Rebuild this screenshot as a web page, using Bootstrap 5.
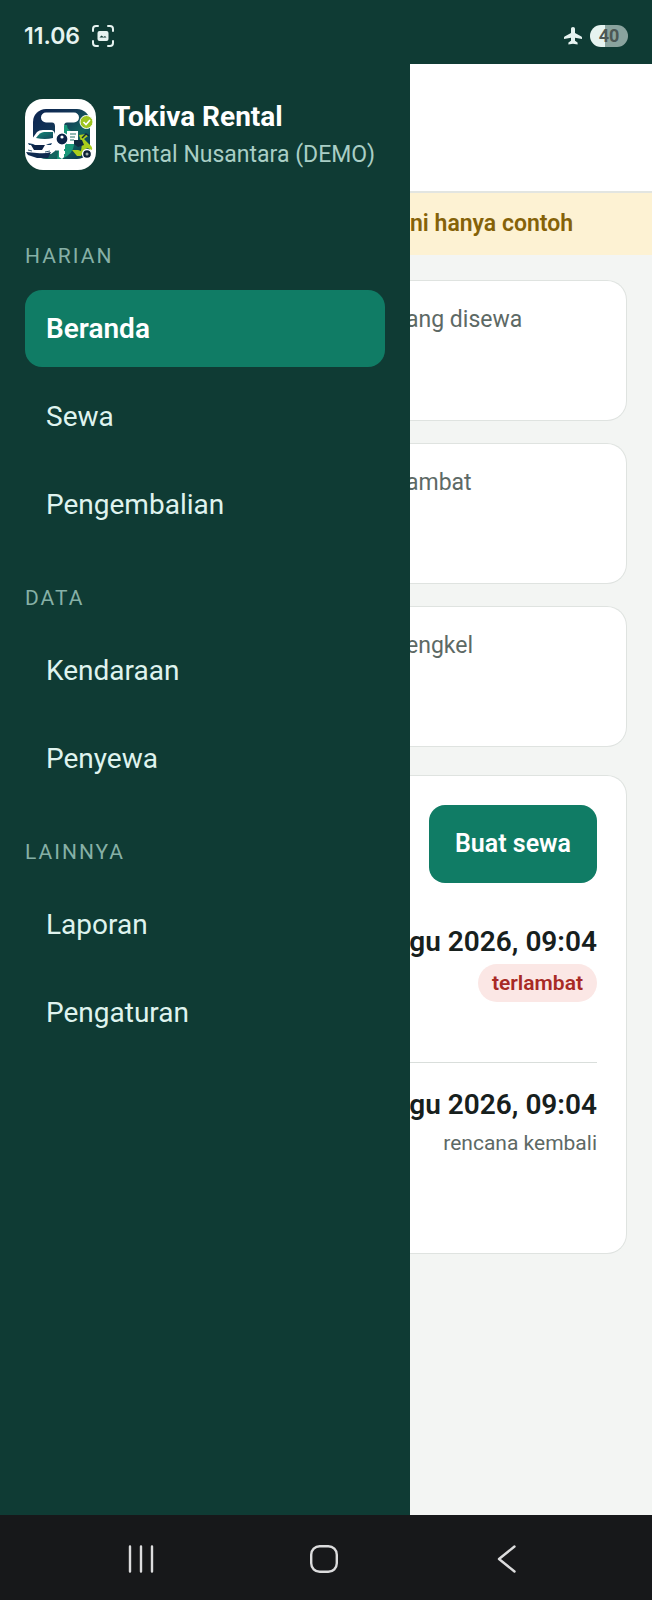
<!DOCTYPE html>
<html lang="id">
<head>
<meta charset="utf-8">
<meta name="viewport" content="width=device-width, initial-scale=1">
<title>Tokiva Rental</title>
<link href="https://cdn.jsdelivr.net/npm/bootstrap@5.3.0/dist/css/bootstrap.min.css" rel="stylesheet">
<style>
  body { font-family: Roboto, "Noto Sans", sans-serif; background: #f3f5f3; color: #17201d; }
  .status-bar { height: 64px; padding: 8px 24px 0; background: #0f3b34; color: #e6f3f0; }
  .clock { font-family: Inter, Roboto, sans-serif; font-size: 23px; line-height: 32px; font-weight: 600; }
  .battery { width: 38px; height: 22px; font-size: 18px; line-height: 22px; font-weight: 700; color: #4c5755; background: linear-gradient(90deg, #e6f3f0 40%, #8aa39e 40%); }

  .drawer { flex: 0 0 410px; z-index: 1; padding: 35px 25px; background: #0f3b34; }
  .brand { gap: 17px; margin-bottom: 65px; }
  .brand-name { font-size: 28px; line-height: 36px; font-weight: 700; color: #fff; }
  .brand-sub { font-size: 23px; line-height: 40px; color: #a9cec5; }
  .group-title { margin: 0 0 18px; font-size: 21px; line-height: 32px; font-weight: 400; letter-spacing: 2px; color: #86b0a6; }
  .menu { gap: 11px; margin-bottom: 39px; }
  .menu .nav-link { padding: 18px 21px; border-radius: 17px; font-size: 28px; line-height: 41px; color: #dff3ee; }
  .menu .nav-link.active { background: #107c65; color: #fff; font-weight: 600; }

  /* the page keeps running a little way under the open drawer */
  .page { margin-left: -4px; min-width: 0; }
  .app-head { height: 129px; background: #fff; border-bottom: 2px solid #e2e5e1; }
  .demo-note { padding: 13px 4px; background: #fdf2d3; color: #856208; font-size: 23px; line-height: 36px; font-weight: 600; }
  .content { padding: 25px 25px 25px 0; }
  .tile { border: 1px solid #dfe3e0; border-left: 0; border-radius: 0 20px 20px 0; }
  .tiles { gap: 22px; margin-bottom: 28px; }
  .stat { height: 141px; padding: 21px 0; font-size: 23px; line-height: 36px; color: #5d6965; }
  .rentals { padding: 29px 29px 28px 0; }
  .rentals-head { margin-bottom: 39px; }
  .btn-make { height: 78px; padding: 0 26px; border: 0; border-radius: 16px; background: #107c65; color: #fff; font-size: 25px; font-weight: 600; }
  .btn-make:hover { background: #0d6b57; color: #fff; }
  .rental { text-align: right; }
  .rental-late { height: 140px; }
  .rental-next { height: 163px; padding-top: 22px; border-top: 1px solid #d9dedb; }
  .when { font-size: 28px; line-height: 40px; font-weight: 600; }
  .plan { font-size: 21px; line-height: 36px; color: #5d6965; }
  .late { margin-top: 2px; padding: 0 14px; border-radius: 19px; background: #fbe7e5; color: #a82a25; font-size: 21px; line-height: 38px; font-weight: 600; }

  .system-nav { height: 85px; padding: 2px 54px 0 50px; background: #17181a; }
  .system-nav button { flex: 1; padding: 0; border: 0; background: none; color: #dcdcdd; }
</style>
</head>
<body>
<div class="d-flex flex-column min-vh-100">
  <header class="status-bar d-flex align-items-center justify-content-between">
    <div class="d-flex align-items-center gap-2">
      <span class="clock">11.06</span>
      <svg class="ms-1" width="22" height="22" viewBox="0 0 22 22" fill="none" stroke="currentColor" stroke-width="2" stroke-linecap="round" aria-hidden="true">
        <path d="M1 6V4a3 3 0 0 1 3-3h2M16 1h2a3 3 0 0 1 3 3v2M21 16v2a3 3 0 0 1-3 3h-2M6 21H4a3 3 0 0 1-3-3v-2"/>
        <rect x="5.500" y="6" width="11" height="10" rx="2" fill="currentColor" stroke="none"/>
        <path d="M7.500 12.500l2-2 2 1.500 1.500-1 1.500 1.500z" fill="#0f3b34" stroke="none"/>
      </svg>
    </div>
    <div class="d-flex align-items-center gap-2">
      <svg width="18" height="18" viewBox="0 0 18 18" fill="currentColor" aria-hidden="true"><path d="M9 0C7.700 0 7 .9 7 2v4L.6 9.600Q0 10 0 10.600V12l7-1.300v3l-2.200 1.600q-.4.300-.4.800v1.400L9 16.700l4.600.8v-1.400q0-.5-.4-.8L11 13.700v-3l7 1.300v-1.400q0-.6-.6-1L11 6V2c0-1.100-.7-2-2-2z"/></svg>
      <span class="battery rounded-pill text-center">40</span>
    </div>
  </header>

  <div class="d-flex flex-grow-1 overflow-hidden">
    <aside class="drawer">
      <div class="brand d-flex align-items-start">
        <svg width="71" height="71" viewBox="0 0 71 71" role="img" aria-label="Logo Tokiva">
          <defs>
            <linearGradient id="sea" x1="0" y1="0" x2="1" y2="1"><stop offset="0" stop-color="#0c2350"/><stop offset=".35" stop-color="#123456"/><stop offset=".65" stop-color="#12655f"/><stop offset="1" stop-color="#08294c"/></linearGradient>
            <linearGradient id="glass" x1="0" y1="0" x2="1" y2="1"><stop offset="0" stop-color="#148b78"/><stop offset="1" stop-color="#13435a"/></linearGradient>
          </defs>
          <rect width="71" height="71" rx="18" fill="#fff"/>
          <rect x="8" y="10" width="57" height="50" rx="13" fill="url(#sea)"/>
          <path d="M38 26h4q0 6 8 7l-1 13q-1 9-12 14l-5 0z" fill="#199779"/>
          <path d="M21 13.500h28a5 5 0 0 1 0 10h-7q-3 0-3 4v24h-9v-24q0-4-3-4h-6a5 5 0 0 1 0-10z" fill="#fff"/>
          <path d="M0 44l7-4 5-7q2-2 6-2h8q3 0 4 4v17l-4 3q-9 1-20-1l-6-3z" fill="#fff"/>
          <path d="M11 39q4-6 8-6h9v6q-8 2-17 0z" fill="url(#glass)"/>
          <path d="M3 44l5 1 2 1-6 0zM27 44l-4 1-2 1 5 0z" fill="#153d63"/>
          <path d="M6 46h14l-3 5H9z" fill="#0c2447"/>
          <path d="M1 53l11 1q8 1 14-1l-3 6H12l-9-3z" fill="#102b50"/>
          <path d="M3 51l4 1M20 53l5-1" stroke="#355a74" stroke-width="1"/>
          <path d="M42 32h11v13H42z" fill="#fff"/>
          <path d="M45 35h6M45 38h5M45 41h4" stroke="#26776c" stroke-width="1.200"/>
          <circle cx="37" cy="40" r="6" fill="#0c2447" stroke="#fff" stroke-width="1.200"/>
          <circle cx="37" cy="38" r="1.600" fill="#fff"/>
          <path d="M34 46h6v4h-1v2h1v3h-1v3l-2 2-3-2z" fill="#fff"/>
          <path d="M54 36l7-1 2 2-4 3 5 5q4 3 3 6l-5-2-4 4-2 4h-4l-5-6 6 0 3 1 1-7z" fill="#a9cd1c"/>
          <path d="M49 41h8l2 5-6 2-4-3z" fill="#102b3d"/>
          <circle cx="62" cy="55" r="4.500" fill="#0c2035" stroke="#fff" stroke-width="1.300"/>
          <circle cx="62" cy="55" r="1.500" fill="#9ba9aa"/>
          <path d="M57 39l4-4 3 2" fill="none" stroke="#102b3d" stroke-width="1.500"/>
          <circle cx="61.500" cy="23" r="6.500" fill="#9dc51f" stroke="#fff" stroke-width="1"/>
          <path d="M58.500 23l2.500 2.500 4-4.500" fill="none" stroke="#fff" stroke-width="1.600"/>
        </svg>
        <div class="text-nowrap">
          <div class="brand-name">Tokiva Rental</div>
          <div class="brand-sub">Rental Nusantara (DEMO)</div>
        </div>
      </div>

      <h2 class="group-title">HARIAN</h2>
      <nav class="menu nav nav-pills flex-column">
        <a class="nav-link active" href="#beranda" aria-current="page">Beranda</a>
        <a class="nav-link" href="#sewa">Sewa</a>
        <a class="nav-link" href="#pengembalian">Pengembalian</a>
      </nav>
      <h2 class="group-title">DATA</h2>
      <nav class="menu nav nav-pills flex-column">
        <a class="nav-link" href="#kendaraan">Kendaraan</a>
        <a class="nav-link" href="#penyewa">Penyewa</a>
      </nav>
      <h2 class="group-title">LAINNYA</h2>
      <nav class="menu nav nav-pills flex-column">
        <a class="nav-link" href="#laporan">Laporan</a>
        <a class="nav-link" href="#pengaturan">Pengaturan</a>
      </nav>
    </aside>

    <main class="page flex-grow-1 text-nowrap">
      <div class="app-head"></div>
      <div class="demo-note">ni hanya contoh</div>
      <div class="content">
        <div class="tiles d-flex flex-column">
          <section class="tile stat bg-white">ang disewa</section>
          <section class="tile stat bg-white">ambat</section>
          <section class="tile stat bg-white">engkel</section>
        </div>
        <section class="tile rentals bg-white">
          <div class="rentals-head d-flex justify-content-end">
            <button type="button" class="btn btn-make">Buat sewa</button>
          </div>
          <div class="rental rental-late">
            <div class="when">gu 2026, 09:04</div>
            <span class="late d-inline-block">terlambat</span>
          </div>
          <div class="rental rental-next">
            <div class="when">gu 2026, 09:04</div>
            <div class="plan">rencana kembali</div>
          </div>
        </section>
      </div>
    </main>
  </div>

  <footer class="system-nav d-flex align-items-center">
    <button type="button" aria-label="Aplikasi terbaru"><svg width="28" height="28" viewBox="0 0 28 28" fill="none" stroke="currentColor" stroke-width="2.400" stroke-linecap="round"><path d="M3 1.500v25M14 1.500v25M25 1.500v25"/></svg></button>
    <button type="button" aria-label="Layar utama"><svg width="28" height="28" viewBox="0 0 28 28" fill="none" stroke="currentColor" stroke-width="2.400"><rect x="1.200" y="1.200" width="25.600" height="25.600" rx="8.500"/></svg></button>
    <button type="button" aria-label="Kembali"><svg width="28" height="28" viewBox="0 0 28 28" fill="none" stroke="currentColor" stroke-width="2.400" stroke-linecap="round" stroke-linejoin="round"><path d="M21.500 1.500L6 14l15.500 12.500"/></svg></button>
  </footer>
</div>
<script src="https://cdn.jsdelivr.net/npm/bootstrap@5.3.0/dist/js/bootstrap.bundle.min.js"></script>
</body>
</html>
